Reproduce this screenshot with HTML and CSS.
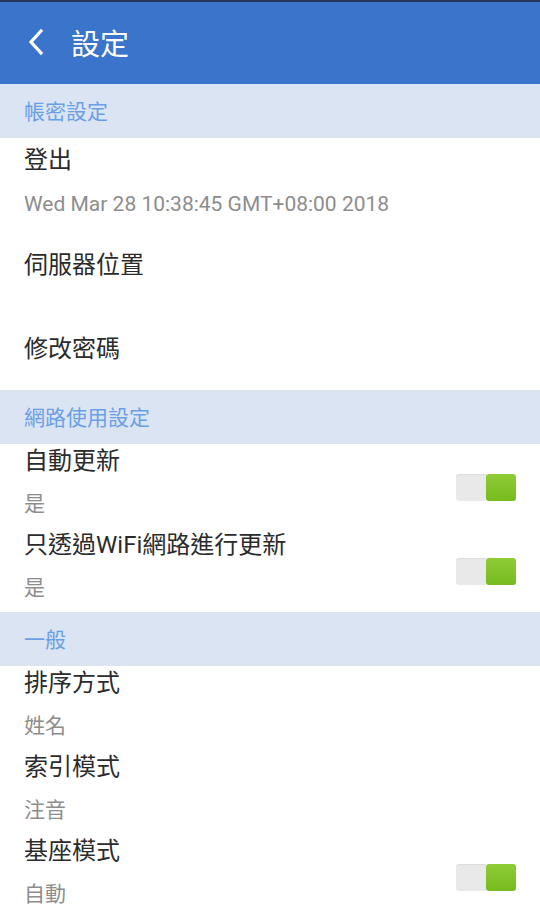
FILE: index.html
```html
<!DOCTYPE html>
<html lang="zh-Hant">
<head>
<meta charset="utf-8">
<link rel="stylesheet" href="styles.css">
</head>
<body>
<div class="app">
  <header class="topbar">
    <svg class="back" width="20" height="28" viewBox="0 0 20 28"><path d="M15 3 L5 14 L15 25" fill="none" stroke="#fff" stroke-width="3.2" stroke-linecap="square"/></svg>
    <span class="title">設定</span>
  </header>

  <div class="section">帳密設定</div>
  <div class="row acct">
    <div class="texts">
      <div class="t">登出</div>
      <div class="s">Wed Mar 28 10:38:45 GMT+08:00 2018</div>
    </div>
  </div>
  <div class="row single"><div class="t">伺服器位置</div></div>
  <div class="row single"><div class="t">修改密碼</div></div>

  <div class="section">網路使用設定</div>
  <div class="row">
    <div class="texts"><div class="t">自動更新</div><div class="s">是</div></div>
    <div class="toggle"><span class="off"></span><span class="on"></span></div>
  </div>
  <div class="row">
    <div class="texts"><div class="t">只透過WiFi網路進行更新</div><div class="s">是</div></div>
    <div class="toggle"><span class="off"></span><span class="on"></span></div>
  </div>

  <div class="section">一般</div>
  <div class="row">
    <div class="texts"><div class="t">排序方式</div><div class="s">姓名</div></div>
  </div>
  <div class="row">
    <div class="texts"><div class="t">索引模式</div><div class="s">注音</div></div>
  </div>
  <div class="row">
    <div class="texts"><div class="t">基座模式</div><div class="s">自動</div></div>
    <div class="toggle"><span class="off"></span><span class="on"></span></div>
  </div>
</div>
</body>
</html>
```
FILE: styles.css
```css
* { box-sizing: border-box; }
html, body { margin: 0; padding: 0; background: #fff; }
body {
  width: 540px;
  height: 924px;
  overflow: hidden;
  font-family: Roboto, "Noto Sans CJK TC", sans-serif;
}
.app { display: flex; flex-direction: column; }
.topbar {
  height: 84px;
  background: #3a74cb;
  border-top: 2px solid #26365f;
  display: flex;
  align-items: center;
  padding-left: 26px;
  gap: 25px;
}
.back { display: block; margin-top: -2px; }
.title {
  color: #fff;
  font-size: 29px;
  line-height: 1;
  font-family: "Noto Sans CJK TC", sans-serif;
  margin-top: -2px;
}
.section {
  height: 54px;
  background: #dbe4f2;
  color: #6a9fe6;
  font-size: 21px;
  font-family: "Noto Sans CJK TC", sans-serif;
  display: flex;
  align-items: center;
  padding-left: 24px;
  padding-bottom: 2px;
}
.row {
  height: 84px;
  display: flex;
  align-items: center;
  justify-content: space-between;
  padding: 0 24px;
}
.texts { display: flex; flex-direction: column; align-self: stretch; }
.row .t {
  font-size: 24px;
  color: #2b2b2b;
  line-height: 34px;
  height: 34px;
  font-family: Roboto, "Noto Sans CJK TC", sans-serif;
}
.row .s {
  font-size: 21px;
  color: #8d8d8d;
  line-height: 28px;
  font-family: Roboto, "Noto Sans CJK TC", sans-serif;
}
.row .texts .s { margin-top: 12px; }
.row.acct .texts { padding-top: 5px; }
.row.acct .texts .s { margin-top: 13px; font-size: 21px; }
.row.single .t { margin-top: 2px; }
.toggle {
  width: 60px;
  height: 27px;
  display: flex;
  margin-top: 3px;
}
.toggle .off {
  flex: 1;
  background: #e9e9e9;
  border-radius: 3px 0 0 3px;
  box-shadow: inset 0 1px 1px rgba(0,0,0,0.06);
}
.toggle .on {
  flex: 1;
  background: linear-gradient(#8fcc36, #76bb1f);
  border-radius: 3px;
}
```
